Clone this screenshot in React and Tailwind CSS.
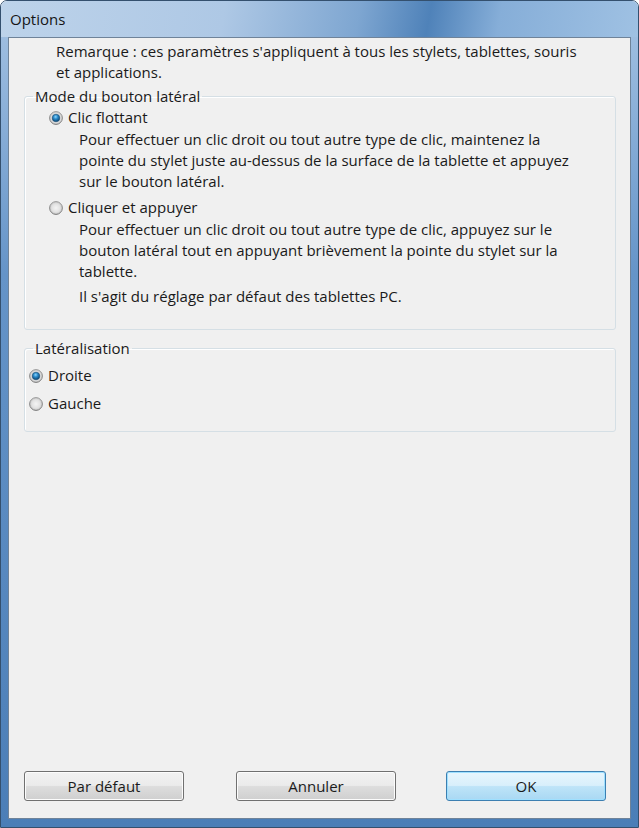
function Radio({ checked }) {
  return (
    <svg width="14" height="14" viewBox="0 0 14 14" className="shrink-0">
      <defs>
        <linearGradient id="rb-ring" x1="0" y1="0" x2="0" y2="1">
          <stop offset="0" stopColor="#9c9c9c" />
          <stop offset="1" stopColor="#7a7a7a" />
        </linearGradient>
        <radialGradient id="rb-face" cx="0.5" cy="0.5" r="0.5">
          <stop offset="0" stopColor="#f4f4f4" />
          <stop offset="0.65" stopColor="#e2e2e2" />
          <stop offset="1" stopColor="#c4c4c4" />
        </radialGradient>
        <radialGradient id="rb-dot" cx="0.45" cy="0.35" r="0.6">
          <stop offset="0" stopColor="#8fd6fb" />
          <stop offset="0.45" stopColor="#2b8ccc" />
          <stop offset="1" stopColor="#0c4a7a" />
        </radialGradient>
      </defs>
      <circle cx="7" cy="7" r="6.4" fill="url(#rb-face)" stroke="url(#rb-ring)" strokeWidth="1" />
      {checked && <circle cx="7" cy="7" r="3.8" fill="url(#rb-dot)" stroke="#1b4e74" strokeWidth="0.6" />}
    </svg>
  );
}

function Option({ checked, label }) {
  return (
    <div className="flex items-center gap-[5px] h-[21px]">
      <Radio checked={checked} />
      <span>{label}</span>
    </div>
  );
}

function Button({ children, primary, className = '' }) {
  const look = primary
    ? 'border-[#3c7fb1] bg-[linear-gradient(to_bottom,#e8f6fd_0%,#d8effb_48%,#bee4f8_52%,#a9d8f3_100%)] shadow-[inset_0_0_0_1px_#9fe0ff]'
    : 'border-[#707070] bg-[linear-gradient(to_bottom,#f2f2f2_0%,#ebebeb_48%,#dddddd_52%,#cfcfcf_100%)] shadow-[inset_0_0_0_1px_#fcfcfc]';
  return (
    <button className={`w-[160px] h-[30px] rounded-[3px] border text-[15px] text-[#1b1b1b] ${look} ${className}`}>
      {children}
    </button>
  );
}

export default function App() {
  return (
    <div className="w-[639px] h-[828px] flex flex-col rounded-t-[7px] border border-[#34506e] overflow-hidden font-['Open_Sans',sans-serif]">
      {/* Title bar */}
      <div className="h-[36px] shrink-0 flex items-center pl-[9px] text-[15px] text-[#151515] bg-[linear-gradient(100deg,#bdd3ea_0%,#aec8e5_35%,#7ea6d1_56%,#4f82b9_67%,#86aed8_78%,#9fc1e3_100%)]">
        Options
      </div>

      {/* Frame + client area */}
      <div className="flex-1 flex flex-col px-[7px] pb-[8px] bg-[linear-gradient(to_bottom,#9dbde0_0%,#6594c8_30%,#4b7eb7_100%)]">
        <div className="flex-1 flex flex-col bg-[#f0f0f0] border border-[#6f8399] text-[15px] leading-[21px] text-[#1a1a1a]">
          <p className="pl-[47px] pt-[3px]">
            Remarque : ces paramètres s'appliquent à tous les stylets, tablettes, souris
            <br />
            et applications.
          </p>

          <fieldset className="mt-[3px] ml-[15px] mr-[14px] border border-[#d5dfe5] rounded-[3px] shadow-[inset_1px_1px_0_#ffffff]">
            <legend className="ml-[8px] px-[2px]">Mode du bouton latéral</legend>
            <div className="pl-[24px] pb-[22px]">
              <Option checked label="Clic flottant" />
              <p className="pl-[30px] mt-[1px]">
                Pour effectuer un clic droit ou tout autre type de clic, maintenez la
                <br />
                pointe du stylet juste au-dessus de la surface de la tablette et appuyez
                <br />
                sur le bouton latéral.
              </p>
              <div className="mt-[5px]">
                <Option label="Cliquer et appuyer" />
              </div>
              <p className="pl-[30px] mt-[1px]">
                Pour effectuer un clic droit ou tout autre type de clic, appuyez sur le
                <br />
                bouton latéral tout en appuyant brièvement la pointe du stylet sur la
                <br />
                tablette.
              </p>
              <p className="pl-[30px] mt-[4px]">Il s'agit du réglage par défaut des tablettes PC.</p>
            </div>
          </fieldset>

          <fieldset className="mt-[8px] ml-[15px] mr-[14px] border border-[#d5dfe5] rounded-[3px] shadow-[inset_1px_1px_0_#ffffff]">
            <legend className="ml-[8px] px-[2px]">Latéralisation</legend>
            <div className="pl-[4px] pt-[6px] pb-[17px] flex flex-col gap-[7px]">
              <Option checked label="Droite" />
              <Option label="Gauche" />
            </div>
          </fieldset>

          <div className="flex-1" />

          <div className="flex pl-[15px] pb-[17px]">
            <Button>Par défaut</Button>
            <Button className="ml-[52px]">Annuler</Button>
            <Button primary className="ml-[50px]">OK</Button>
          </div>
        </div>
      </div>
    </div>
  );
}
